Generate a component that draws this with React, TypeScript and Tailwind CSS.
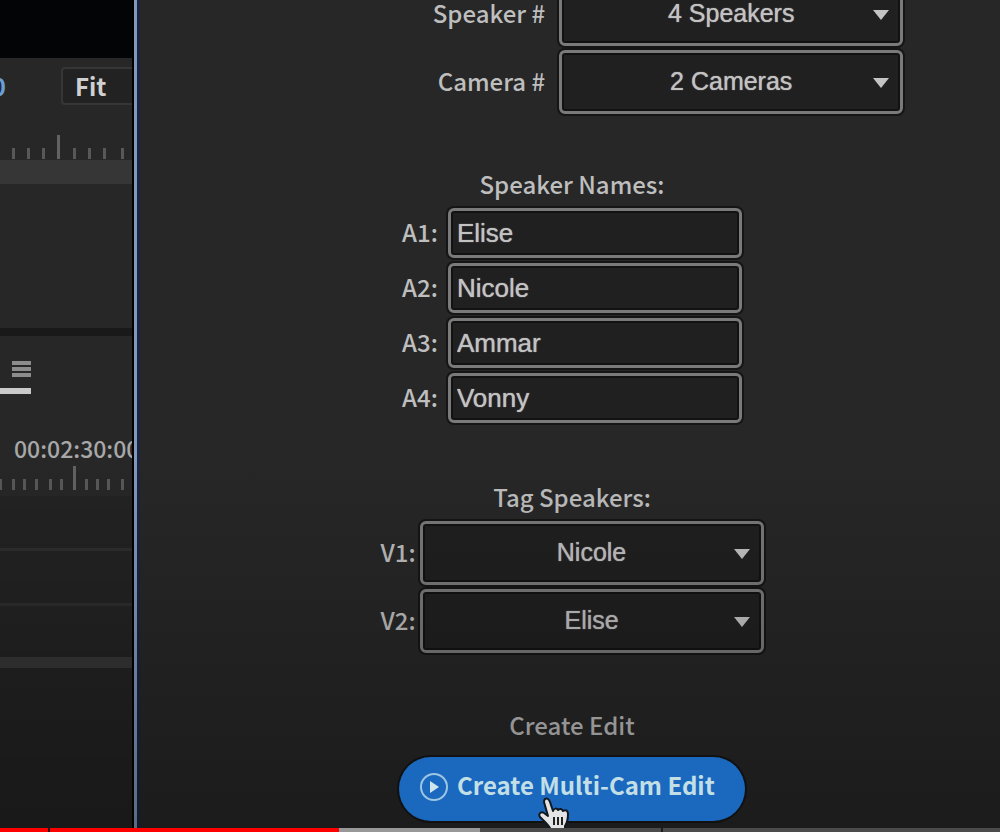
import { useState } from "react";
import type { ReactNode } from "react";

const labelFont = "font-['Noto_Sans_CJK_SC','Noto_Sans',sans-serif]";
const fieldFont =
  "font-['Liberation_Sans',Arial,sans-serif] [text-shadow:0_0_1px_currentColor]";
const boxStyle =
  "rounded-md border-3 border-[#7a7a7a] bg-[#202020] text-[#c2c2c2] shadow-[0_0_0_2px_#151515,inset_0_0_0_2px_#121212] outline-none";

const speakers = ["Elise", "Nicole", "Ammar", "Vonny"];

// Ruler ticks, x position in the ruler
const sourceTicks = [13, 28, 43, 58, 74, 89, 104, 122];
const timelineTicks = [0, 13, 24, 36, 50, 61, 74, 86, 97, 108, 122];

// Player chapters, in percent of the video
const segments = [
  { width: 4.8, color: "bg-[#ff0000]" },
  { width: 0.2, color: "bg-[#301010]" },
  { width: 28.9, color: "bg-[#ff0000]" },
  { width: 14.1, color: "bg-[#989898]" },
  { width: 18.1, color: "bg-[#4b4b4b]" },
  { width: 0.2, color: "bg-[#1c1c1c]" },
  { width: 33.7, color: "bg-[#4b4b4b]" },
];

const Ruler = ({ ticks, major }: { ticks: number[]; major: number }) => (
  <svg className="block h-6 w-full" aria-hidden="true">
    {ticks.map((x) => (
      <rect
        key={x}
        x={x - 1}
        y={x === major ? 0 : 13}
        width="3"
        height={x === major ? 24 : 11}
        fill={x === major ? "#626262" : "#585858"}
      />
    ))}
  </svg>
);

const SelectBox = ({
  id,
  options,
  initial,
}: {
  id: string;
  options: string[];
  initial: string;
}) => {
  const [value, setValue] = useState(initial);

  return (
    <div className="relative">
      <select
        id={id}
        value={value}
        onChange={(e) => setValue(e.target.value)}
        className={`block h-16 w-[344px] appearance-none text-[25px] [text-align-last:center] ${fieldFont} ${boxStyle}`}
      >
        {options.map((option) => (
          <option key={option}>{option}</option>
        ))}
      </select>
      <svg
        className="pointer-events-none absolute top-7 right-3.5 h-2.5 w-4"
        viewBox="0 0 16 10"
        aria-hidden="true"
      >
        <path d="M0 0H16L8 10Z" fill="#c4c4c4" />
      </svg>
    </div>
  );
};

const FieldLabel = ({ id, children }: { id: string; children: ReactNode }) => (
  <label
    htmlFor={id}
    className={`pb-0.5 text-right text-2xl font-medium text-[#bebebe] ${labelFont}`}
  >
    {children}
  </label>
);

const Heading = ({ children }: { children: ReactNode }) => (
  <h2 className={`mb-2 text-center text-2xl font-medium text-[#bebebe] ${labelFont}`}>
    {children}
  </h2>
);

const HandCursor = () => (
  <svg
    className="pointer-events-none absolute top-10 left-[138px] h-[35px] w-[34px]"
    viewBox="0 0 34 35"
    aria-hidden="true"
  >
    <path
      d="M8 2C10 1 12 2 13 5L16 14C17 11 20 11 21 13C23 11 25 12 26 14C29 12 31 14 31 17C31 23 30 26 28 29V33H14C12 28 8 25 3 20C1 17 4 14 7 16L11 19L7 5C7 4 7 3 8 2Z"
      fill="#e4e4e4"
      stroke="#101820"
      strokeWidth="2"
      strokeLinejoin="round"
    />
    <path d="M17 20V28M21 20V28M25 20V28" stroke="#222" strokeWidth="2" />
  </svg>
);

const EditorPanel = () => (
  <aside className="flex w-[132px] shrink-0 flex-col overflow-hidden bg-[#272727]">
    <div className="h-[58px] bg-[#030406]" />
    <div className="flex h-[77px] items-start justify-between pt-[9px]">
      <span
        className={`flex h-[38px] w-1.5 items-center justify-end overflow-hidden text-2xl font-bold text-[#6a9fd8] ${labelFont}`}
      >
        0
      </span>
      <button
        className={`h-[38px] w-[71px] rounded-l border-2 border-r-0 border-[#363636] bg-[#222] pl-3 text-left text-2xl font-bold text-[#d0d0d0] ${labelFont}`}
      >
        Fit
      </button>
    </div>
    <Ruler ticks={sourceTicks} major={58} />
    <div className="mt-px h-6 bg-[#363636]" />
    <div className="h-36" />
    <div className="h-2 bg-[#191919]" />
    <div className="mt-[25px] w-[31px]">
      <button aria-label="Panel menu" className="ml-3 flex w-[19px] flex-col gap-[2px]">
        <span className="h-1 w-full bg-[#8c8c8c]" />
        <span className="h-1 w-full bg-[#8c8c8c]" />
        <span className="h-1 w-full bg-[#8c8c8c]" />
      </button>
      <div className="mt-[11px] h-1.5 bg-[#cacaca]" />
    </div>
    <p
      className={`mt-[38px] mb-0.5 pl-3.5 text-[23px] leading-8 font-medium whitespace-nowrap text-[#a8a8a8] ${labelFont}`}
    >
      00:02:30:00
    </p>
    <Ruler ticks={timelineTicks} major={74} />
    <div className="mt-1.5 flex grow flex-col bg-[#232323]">
      <div className="h-[52px]" />
      <div className="h-[3px] bg-[#2e2e2e]" />
      <div className="h-[52px]" />
      <div className="h-[3px] bg-[#2e2e2e]" />
      <div className="h-[51px]" />
      <div className="h-[11px] bg-[#363636]" />
    </div>
  </aside>
);

const MultiCamPanel = () => (
  <main className="flex grow flex-col items-center overflow-hidden bg-[#272727] pl-1">
    <div className="-mt-[18px] grid grid-cols-[auto_344px] items-center gap-x-3.5 gap-y-1 pl-48">
      <FieldLabel id="speaker-count">Speaker #</FieldLabel>
      <SelectBox
        id="speaker-count"
        initial="4 Speakers"
        options={["2 Speakers", "3 Speakers", "4 Speakers"]}
      />
      <FieldLabel id="camera-count">Camera #</FieldLabel>
      <SelectBox
        id="camera-count"
        initial="2 Cameras"
        options={["1 Camera", "2 Cameras", "3 Cameras"]}
      />
    </div>

    <section className="mt-[54px]">
      <Heading>Speaker Names:</Heading>
      <div className="grid grid-cols-[auto_294px] items-center gap-x-2.5 gap-y-[5px]">
        {speakers.map((name, index) => (
          <div key={name} className="contents">
            <FieldLabel id={`a${index + 1}`}>A{index + 1}:</FieldLabel>
            <input
              id={`a${index + 1}`}
              defaultValue={name}
              className={`h-[50px] w-full px-1.5 text-[26px] ${fieldFont} ${boxStyle}`}
            />
          </div>
        ))}
      </div>
    </section>

    <section className="mt-[58px]">
      <Heading>Tag Speakers:</Heading>
      <div className="grid grid-cols-[auto_344px] items-center gap-x-1 gap-y-1">
        <FieldLabel id="v1">V1:</FieldLabel>
        <SelectBox id="v1" initial="Nicole" options={speakers} />
        <FieldLabel id="v2">V2:</FieldLabel>
        <SelectBox id="v2" initial="Elise" options={speakers} />
      </div>
    </section>

    <section className="mt-14 flex flex-col items-center gap-2">
      <Heading>Create Edit</Heading>
      <div className="relative z-10">
        <button
          className={`flex h-16 w-[346px] items-center gap-2 rounded-full bg-[#1a69bf] pb-1 pl-5 text-2xl font-bold text-[#c3dfe6] shadow-[0_0_0_2px_#111] ${labelFont}`}
        >
          <svg className="size-[30px] shrink-0" viewBox="0 0 30 30" fill="none" aria-hidden="true">
            <circle cx="15" cy="15" r="13" stroke="#9cc6e2" strokeWidth="2" />
            <path d="M11 9L20 15L11 21Z" fill="#cfe6ee" />
          </svg>
          <span className="pb-1 whitespace-nowrap">Create Multi-Cam Edit</span>
        </button>
        <HandCursor />
      </div>
    </section>
  </main>
);

export default function App() {
  return (
    <div className="relative flex h-screen flex-col overflow-hidden bg-[#272727]">
      <div className="flex min-h-0 grow">
        <EditorPanel />
        <div className="w-2 shrink-0 border-l-2 border-black bg-[#1b2442]">
          <div className="h-full w-[3px] bg-[#8198b8]" />
        </div>
        <MultiCamPanel />
      </div>

      {/* Player shade and progress bar */}
      <div className="pointer-events-none absolute inset-x-0 bottom-1 h-[45%] bg-linear-to-t from-black/30 to-transparent" />
      <div className="flex h-1 shrink-0">
        {segments.map((segment, index) => (
          <div key={index} className={segment.color} style={{ width: `${segment.width}%` }} />
        ))}
      </div>
    </div>
  );
}
